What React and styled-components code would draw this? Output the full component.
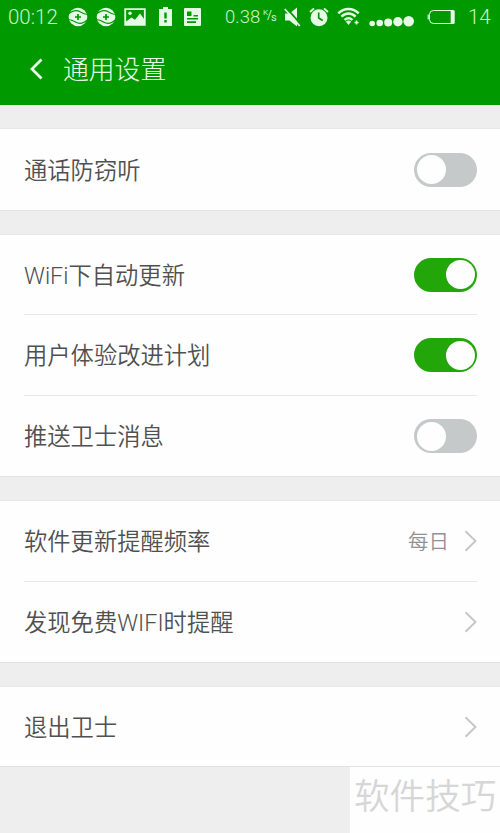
import React, { useState } from 'react'
import styled, { createGlobalStyle } from 'styled-components';

const GlobalStyle = createGlobalStyle`
  * {
    box-sizing: border-box;
  }
  body {
    margin: 0;
    background-color: #eeeeee;
    font-family: Roboto, "Noto Sans CJK SC", sans-serif;
    font-weight: 350;
  }
`;

const Screen = styled.div`
  display: flex;
  flex-direction: column;
  width: 500px;
  height: 833px;
  overflow: hidden;
  background-color: #eeeeee;
`;

const Header = styled.header`
  height: 105px;
  background-color: #009900;
  color: #e9ffe9;
`;

const StatusBar = styled.div`
  display: flex;
  align-items: center;
  height: 33px;
  padding-left: 8px;
  font-weight: 300;
  color: #c9f5c9;

  svg {
    display: block;
    flex: none;
    color: #e6fbe6;
  }
`;

const StatusText = styled.span`
  flex: none;
  width: ${props => props.$width}px;
  margin-left: ${props => props.$left || 0}px;
  padding-top: 2px;
  font-size: ${props => props.$size}px;
  line-height: 31px;
  white-space: nowrap;
`;

const Slot = styled.span`
  flex: none;
  margin-left: ${props => props.$left}px;
`;

const Unit = styled.span`
  display: flex;
  flex: none;
  width: 13px;
  margin-left: 3px;
  font-size: 12px;
  font-weight: 400;
  line-height: 13px;

  .top {
    font-size: 8px;
    line-height: 8px;
  }
  .bottom {
    padding-top: 2px;
    font-size: 11px;
  }
  .slash {
    margin: 0 -1px;
  }
`;

const TitleBar = styled.div`
  display: flex;
  align-items: center;
  height: 72px;
  padding-left: 30px;

  h1 {
    margin: 0 0 0 20px;
    padding-top: 2px;
    font-size: 25.8px;
    font-weight: 300;
    line-height: 70px;
  }
`;

const Section = styled.section`
  margin-top: 23px;
  border-top: 1px solid #e8e8e8;
  border-bottom: 1px solid #e2e2e2;
  background-color: #fefefe;
`;

const Row = styled.div`
  display: flex;
  align-items: center;
  height: ${props => props.$height || 81}px;
  margin: 0 23px 0 24px;
  color: #505050;

  & + & {
    border-top: 1px solid #e7e7e7;
  }
`;

const Label = styled.span`
  flex: 1;
  padding-top: 2px;
  font-size: 23.3px;
  line-height: 34px;
`;

const Value = styled.span`
  margin-right: 15px;
  padding-top: 2px;
  font-size: 20.5px;
  line-height: 30px;
  color: #929292;
`;

const Switch = styled.button`
  display: flex;
  justify-content: ${props => props.$on ? 'flex-end' : 'flex-start'};
  align-items: center;
  width: 63px;
  height: 34px;
  padding: 0 2.5px;
  border: none;
  border-radius: 17px;
  background-color: ${props => props.$on ? '#22a60a' : '#c5c9ca'};
  cursor: pointer;
`;

const Knob = styled.span`
  width: 29px;
  height: 29px;
  border-radius: 50%;
  background-color: #fefefe;
`;

const Footer = styled.footer`
  display: flex;
  flex: 1;
  justify-content: flex-end;
`;

const Mark = styled.div`
  width: 150px;
  padding-left: 4px;
  background-color: #fefefe;
  color: #d6d6d6;
  font-size: 35.6px;
  line-height: 61px;
  white-space: nowrap;
`;

function SyncIcon() {
  return (
    <svg width="20" height="20" viewBox="0 0 20 20" fill="none">
      <circle cx="10" cy="10" r="9.300" fill="currentColor" />
      <path d="M0 7.500C4.500 3.300 9 2.800 12.500 5c2 1.300 4 2.300 7.500 2.500M0 12.500c3.500.2 5.500 1.200 7.500 2.500 3.500 2.200 8 1.700 12.500-2.500" stroke="#009900" strokeWidth="1.200" />
      <path d="M10 7v6M7 10h6" stroke="#009900" strokeWidth="1.700" />
    </svg>
  )
}

function PictureIcon() {
  return (
    <svg width="22" height="18" viewBox="0 0 22 18" fill="none">
      <path d="M1.200 1.200h19.600v15.600H1.200z" stroke="currentColor" strokeWidth="1.800" />
      <path d="M2 16v-2.500l5.500-4 3.500 2.300 5-6.300L20 11v5Z" fill="currentColor" />
      <circle cx="6" cy="5.300" r="1.700" fill="currentColor" />
    </svg>
  )
}

function AlertIcon() {
  return (
    <svg width="13" height="19" viewBox="0 0 13 19">
      <path d="M4 0h5v2h4v17H0V2h4Z" fill="currentColor" />
      <path d="M5.300 5.500h2.400v6H5.300zM5.300 13h2.400v2.400H5.300z" fill="#009900" />
    </svg>
  )
}

function NewsIcon() {
  return (
    <svg width="17" height="18" viewBox="0 0 17 18">
      <rect width="17" height="18" rx="1" fill="currentColor" />
      <path d="M3 3.500h4.500V8H3zM9.500 7h4.500v1.500H9.500zM3 10h11v1.600H3zM3 13.300h9v1.600H3z" fill="#009900" />
    </svg>
  )
}

function MuteIcon() {
  return (
    <svg width="17" height="20" viewBox="0 0 17 20" fill="none">
      <path d="M1 6.500h4.500l7.500-6v19l-7.500-6H1Z" fill="currentColor" />
      <path d="M2.300 .8l15 17" stroke="#009900" strokeWidth="1.800" />
      <path d="M.8 2l15 17" stroke="currentColor" strokeWidth="1.700" />
    </svg>
  )
}

function AlarmIcon() {
  return (
    <svg width="20" height="20" viewBox="0 0 20 20" fill="none">
      <circle cx="10" cy="10.800" r="8.500" fill="currentColor" />
      <path d="M1 5l4-3.600M19 5l-4-3.600" stroke="currentColor" strokeWidth="1.800" />
      <path d="M9.700 5.500V11l4 2.500" stroke="#009900" strokeWidth="1.700" />
    </svg>
  )
}

function WifiIcon() {
  return (
    <svg width="24" height="19" viewBox="0 0 24 19" fill="none">
      <path d="M1.300 6.300C7 .4 16 .4 21.700 6.300M4.400 9.700c4-4.200 10.200-4.200 14.200 0M7.600 13c2.400-2.500 5.400-2.500 7.800 0" stroke="currentColor" strokeWidth="2.500" />
      <path d="M8.800 14.600c1.600-1.600 3.800-1.600 5.400 0L11.500 18Z" fill="currentColor" />
      <path d="M19.500 13.500v4M17.500 15.500h4" stroke="currentColor" strokeWidth="1.500" />
    </svg>
  )
}

function SignalIcon() {
  return (
    <svg width="46" height="20" viewBox="0 0 46 20" fill="currentColor">
      <circle cx="3.200" cy="16.500" r="2.800" />
      <circle cx="10.700" cy="16" r="3.300" />
      <circle cx="19.200" cy="15.400" r="4" />
      <circle cx="28.900" cy="14.800" r="4.700" />
      <circle cx="39.700" cy="14.200" r="5.300" />
    </svg>
  )
}

function BatteryIcon() {
  return (
    <svg width="29" height="16" viewBox="0 0 29 16" fill="none">
      <path d="M25 1.500H6.500a4 4 0 0 0-4 4v5a4 4 0 0 0 4 4H25" stroke="currentColor" strokeWidth="1" />
      <path d="M1.200 5.500v5" stroke="currentColor" strokeWidth="1.200" />
      <rect x="23.700" y="1" width="4" height="14" rx="1.500" fill="currentColor" />
    </svg>
  )
}

function BackIcon() {
  return (
    <svg width="13" height="22" viewBox="0 0 13 22" fill="none">
      <path d="M11.500 1.500L2 11l9.500 9.500" stroke="currentColor" strokeWidth="2.800" />
    </svg>
  )
}

function Arrow() {
  return (
    <svg width="13" height="22" viewBox="0 0 13 22" fill="none">
      <path d="M1.500 1.200L11.500 11l-10 9.800" stroke="#c6c6c6" strokeWidth="1.900" />
    </svg>
  )
}

function ToggleRow({ label, initial, height }) {
  const [on, setOn] = useState(initial);

  const handleToggle = () => {
    setOn(!on)
  }

  return (
    <Row $height={height}>
      <Label>{label}</Label>
      <Switch $on={on} onClick={handleToggle} aria-label={label}>
        <Knob />
      </Switch>
    </Row>
  )
}

function LinkRow({ label, value, height }) {
  return (
    <Row $height={height}>
      <Label>{label}</Label>
      {value ? <Value>{value}</Value> : null}
      <Arrow />
    </Row>
  )
}

function App() {
  return (
    <Screen>
      <GlobalStyle />
      <Header>
        <StatusBar>
          <StatusText $width={52} $size={20.5}>00:12</StatusText>
          <Slot $left={8}><SyncIcon /></Slot>
          <Slot $left={8}><SyncIcon /></Slot>
          <Slot $left={8}><PictureIcon /></Slot>
          <Slot $left={13}><AlertIcon /></Slot>
          <Slot $left={12}><NewsIcon /></Slot>
          <StatusText $left={24} $width={35} $size={18.5}>0.38</StatusText>
          <Unit>
            <span className="top">K</span>
            <span className="slash">/</span>
            <span className="bottom">s</span>
          </Unit>
          <Slot $left={8}><MuteIcon /></Slot>
          <Slot $left={8}><AlarmIcon /></Slot>
          <Slot $left={8}><WifiIcon /></Slot>
          <Slot $left={8}><SignalIcon /></Slot>
          <Slot $left={12}><BatteryIcon /></Slot>
          <StatusText $left={12} $width={26} $size={20.5}>14</StatusText>
        </StatusBar>
        <TitleBar>
          <BackIcon />
          <h1>通用设置</h1>
        </TitleBar>
      </Header>
      <Section>
        <ToggleRow label="通话防窃听" initial={false} />
      </Section>
      <Section>
        <ToggleRow label="WiFi下自动更新" initial={true} height={79} />
        <ToggleRow label="用户体验改进计划" initial={true} />
        <ToggleRow label="推送卫士消息" initial={false} />
      </Section>
      <Section>
        <LinkRow label="软件更新提醒频率" value="每日" height={80} />
        <LinkRow label="发现免费WIFI时提醒" />
      </Section>
      <Section>
        <LinkRow label="退出卫士" height={79} />
      </Section>
      <Footer>
        <Mark>软件技巧</Mark>
      </Footer>
    </Screen>
  )
}

export default App;
